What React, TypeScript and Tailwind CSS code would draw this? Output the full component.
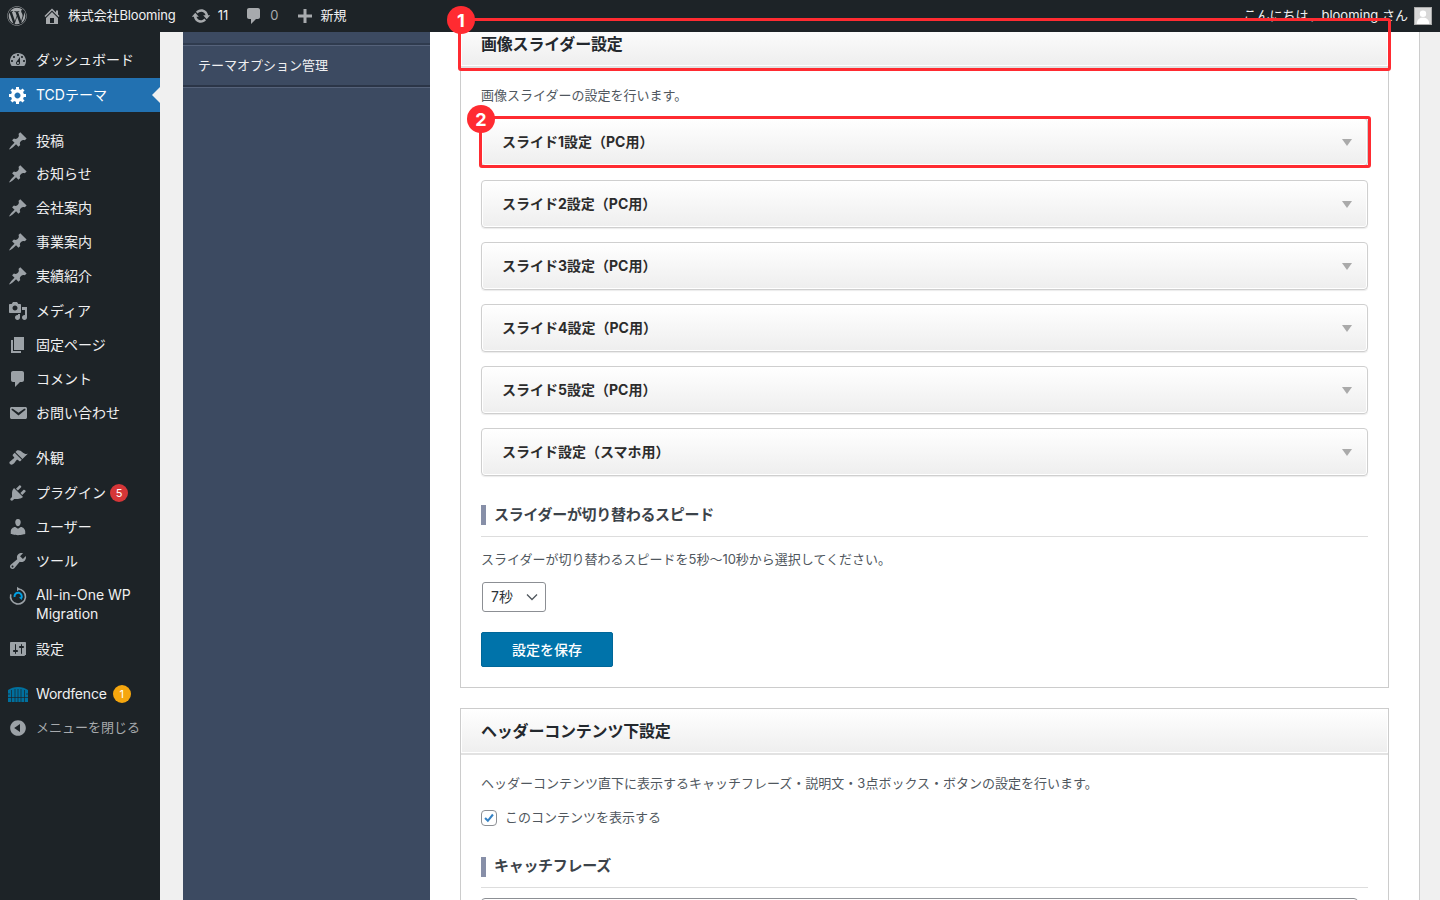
import { FaWordpress } from "react-icons/fa"

const paths = {
  dashboard: "M3.76 16h12.48c1.1-1.37 1.76-3.11 1.76-5 0-4.42-3.58-8-8-8s-8 3.58-8 8c0 1.89.66 3.63 1.76 5zM10 4c.55 0 1 .45 1 1s-.45 1-1 1-1-.45-1-1 .45-1 1-1zM6 6c.55 0 1 .45 1 1s-.45 1-1 1-1-.45-1-1 .45-1 1-1zm8 0c.55 0 1 .45 1 1s-.45 1-1 1-1-.45-1-1 .45-1 1-1zm-5.37 5.55L12 7v6c0 1.1-.9 2-2 2s-2-.9-2-2c0-.57.24-1.08.63-1.45zM4 10c.55 0 1 .45 1 1s-.45 1-1 1-1-.45-1-1 .45-1 1-1zm12 0c.55 0 1 .45 1 1s-.45 1-1 1-1-.45-1-1 .45-1 1-1zm-5 3c0-.55-.45-1-1-1s-1 .45-1 1 .45 1 1 1 1-.45 1-1z",
  pin: "M10.44 3.02l1.82-1.82 6.36 6.35-1.83 1.82c-1.05-.68-2.48-.57-3.41.36l-.75.75c-.92.93-1.04 2.35-.35 3.41l-1.83 1.82-2.41-2.41-2.8 2.79c-.42.42-3.38 2.71-3.8 2.29s1.86-3.39 2.28-3.81l2.79-2.79L4.1 9.36l1.83-1.82c1.05.69 2.48.57 3.4-.36l.75-.75c.93-.92 1.05-2.35.36-3.41z",
  gear: "M18 12h-2.18c-.17.7-.44 1.35-.81 1.93l1.54 1.54-2.1 2.1-1.54-1.54c-.58.36-1.23.63-1.91.79V19H8v-2.18c-.68-.16-1.33-.43-1.91-.79l-1.54 1.54-2.12-2.12 1.54-1.54c-.36-.58-.63-1.23-.79-1.91H1V9.03h2.17c.16-.7.44-1.35.8-1.94L2.43 5.55l2.1-2.1 1.54 1.54c.58-.37 1.24-.64 1.93-.81V2h3v2.18c.68.16 1.33.43 1.91.79l1.54-1.54 2.12 2.12-1.54 1.54c.36.59.64 1.24.8 1.94H18V12zm-8.5 1.5c1.66 0 3-1.34 3-3s-1.34-3-3-3-3 1.34-3 3 1.34 3 3 3z",
  media: "M13 11V4c0-.55-.45-1-1-1h-1.67L9 1H5L3.67 3H2c-.55 0-1 .45-1 1v7c0 .55.45 1 1 1h10c.55 0 1-.45 1-1zM7 4.5c1.38 0 2.5 1.12 2.5 2.5S8.38 9.5 7 9.5 4.5 8.38 4.5 7 5.62 4.5 7 4.5zM14 6h5v10.5c0 1.38-1.12 2.5-2.5 2.5S14 17.88 14 16.5s1.12-2.5 2.5-2.5c.17 0 .34.02.5.05V9h-3V6zm-4 8.05V13h2v3.5c0 1.38-1.12 2.5-2.5 2.5S7 17.88 7 16.5 8.12 14 9.5 14c.17 0 .34.02.5.05z",
  page: "M6 15V2h10v13H6zm-1 1h8v2H3V5h2v11z",
  comment: "M5 2h9c1.1 0 2 .9 2 2v7c0 1.1-.9 2-2 2h-2l-5 5v-5H5c-1.1 0-2-.9-2-2V4c0-1.1.9-2 2-2z",
  mail: "M3.87 4h13.25C18.37 4 19 4.59 19 5.79v8.42c0 1.19-.63 1.79-1.88 1.79H3.87c-1.25 0-1.88-.6-1.88-1.79V5.79c0-1.2.63-1.79 1.88-1.79zm6.62 8.6l6.74-5.53c.24-.2.43-.66.13-1.07-.29-.41-.82-.42-1.17-.17l-5.7 3.86L4.8 5.83c-.35-.25-.88-.24-1.17.17-.3.41-.11.87.13 1.07z",
  appearance: "M14.48 11.06L7.41 3.99l1.5-1.5c.5-.56 2.3-.47 3.51.32 1.21.8 1.43 1.28 2.91 2.1 1.18.64 2.45 1.26 4.45.85zm-.71.71L6.7 4.7 4.93 6.47c-.39.39-.39 1.02 0 1.41l1.06 1.06c.39.39.39 1.03 0 1.42-.6.6-1.43 1.11-2.21 1.69-.35.26-.7.53-1.01.84C1.43 13.23.79 14.75 2.02 15.98c1.24 1.24 2.76.59 4.09-.74.31-.31.58-.66.85-1.01.57-.78 1.08-1.61 1.69-2.21.39-.39 1.02-.39 1.41 0l1.06 1.06c.39.39 1.02.39 1.41 0z",
  plugin: "M13.11 4.36L9.87 7.6 8 5.73l3.24-3.24c.35-.34 1.05-.2 1.56.32.52.51.66 1.21.31 1.55zm-8 1.77l.91-1.12 9.01 9.01-1.19.84c-.71.71-2.63 1.16-3.82 1.16H6.14L4.9 17.26c-.59.59-1.54.59-2.12 0-.59-.58-.59-1.53 0-2.12l1.24-1.24v-3.88c0-1.13.4-3.19 1.09-3.89zm7.26 3.97l3.24-3.24c.34-.35 1.04-.21 1.55.31.52.51.66 1.21.31 1.55l-3.24 3.25z",
  users: "M10 9.25c-2.27 0-2.73-3.44-2.73-3.44C7 4.02 7.82 2 9.97 2c2.16 0 2.98 2.02 2.71 3.81 0 0-.41 3.44-2.68 3.44zm0 2.57L12.72 10c2.39 0 4.52 2.33 4.52 4.53v2.49s-3.65 1.13-7.24 1.13c-3.65 0-7.24-1.13-7.24-1.13v-2.49c0-2.25 1.94-4.48 4.47-4.48z",
  tools: "M16.68 9.77c-1.34 1.34-3.3 1.67-4.95.99l-5.41 6.52c-.99.99-2.59.99-3.58 0s-.99-2.59 0-3.57l6.52-5.42c-.68-1.65-.35-3.61.99-4.95 1.28-1.28 3.12-1.62 4.72-1.06l-2.89 2.89 2.82 2.82 2.86-2.87c.53 1.58.18 3.39-1.08 4.65zM3.81 16.21c.4.39 1.04.39 1.43 0 .4-.4.4-1.04 0-1.43-.39-.4-1.03-.4-1.43 0-.39.39-.39 1.03 0 1.43z",
  settings: "M18 16V4c0-.55-.45-1-1-1H3c-.55 0-1 .45-1 1v12c0 .55.45 1 1 1h13c.55 0 1-.45 1-1zM8 11h1c.55 0 1 .45 1 1s-.45 1-1 1H8v1.5c0 .28-.22.5-.5.5s-.5-.22-.5-.5V13H6c-.55 0-1-.45-1-1s.45-1 1-1h1V5.5c0-.28.22-.5.5-.5s.5.22.5.5V11zm5-2h-1c-.55 0-1-.45-1-1s.45-1 1-1h1V5.5c0-.28.22-.5.5-.5s.5.22.5.5V7h1c.55 0 1 .45 1 1s-.45 1-1 1h-1v5.5c0 .28-.22.5-.5.5s-.5-.22-.5-.5V9z",
  collapse: "M10 2.16c4.33 0 7.84 3.51 7.84 7.84s-3.51 7.84-7.84 7.84S2.16 14.33 2.16 10 5.71 2.16 10 2.16zm2 11.72V6.12L6.18 9.97z",
  home: "M16 8.5l1.53 1.53-1.06 1.06L10 4.62l-6.47 6.47-1.06-1.06L10 2.5l4 4v-2h2v4zm-6-2.46l6 5.99V18H4v-5.97zM12 17v-5H8v5h4z",
  update: "M10.2 3.28c3.53 0 6.43 2.61 6.92 6h2.08l-3.5 4-3.5-4h2.32c-.45-1.97-2.21-3.45-4.32-3.45-1.45 0-2.73.71-3.54 1.78L4.95 5.66C6.23 4.2 8.11 3.28 10.2 3.28zm-.4 13.44c-3.52 0-6.43-2.61-6.92-6H.8l3.5-4c1.17 1.33 2.33 2.67 3.5 4H5.48c.45 1.97 2.21 3.45 4.32 3.45 1.45 0 2.73-.71 3.54-1.78l1.71 1.95c-1.28 1.46-3.15 2.38-5.25 2.38z",
  plus: "M17 8.5v3h-5.5V17h-3v-5.5H3v-3h5.5V3h3v5.5z",
}

function Dash({ d, className }: { d: string; className?: string }) {
  return (
    <svg viewBox="0 0 20 20" className={className} fill="currentColor" fillRule="evenodd">
      <path d={d} />
    </svg>
  )
}

function MigrationIcon() {
  return (
    <svg viewBox="0 0 20 20" className="w-5 h-5" fill="none">
      <path d="M10 3a7.5 7.5 0 1 1-7.2 5.4" stroke="#9ca2a7" strokeWidth="1.6" />
      <path d="M9 0.8 12 3 9 5.2z" fill="#9ca2a7" />
      <path d="M6.6 11a3.6 3.6 0 1 1 6.6 1.2" stroke="#00a0e4" strokeWidth="2" />
      <path d="M10.8 11.6 13.8 11l.2 3z" fill="#00a0e4" />
    </svg>
  )
}

function FenceIcon() {
  return (
    <svg viewBox="0 0 20 15" className="w-5 h-[15px]" fill="#00709e">
      <path d="M0 3c3-2 6-3 10-3s7 1 10 3v12H0z" />
      <g stroke="#1d2327" strokeWidth="0.7" fill="none">
        <path d="M3.5 3v12M7 2v13M10 2v13M13 2v13M16.5 3v12M0 10.5h20M0 7h2M18 7h2" />
      </g>
    </svg>
  )
}

type Item = { label: string; d?: string; custom?: "migration" | "fence"; gap?: string; h?: string; badge?: string; badgeClass?: string }

const menu: Item[] = [
  { label: "投稿", d: paths.pin, gap: "mt-[12px]" },
  { label: "お知らせ", d: paths.pin, gap: "-mt-px" },
  { label: "会社案内", d: paths.pin },
  { label: "事業案内", d: paths.pin },
  { label: "実績紹介", d: paths.pin },
  { label: "メディア", d: paths.media, gap: "mt-px" },
  { label: "固定ページ", d: paths.page },
  { label: "コメント", d: paths.comment },
  { label: "お問い合わせ", d: paths.mail },
  { label: "外観", d: paths.appearance, gap: "mt-[11px]" },
  { label: "プラグイン", d: paths.plugin, gap: "mt-px", badge: "5", badgeClass: "bg-[#d63638] ml-[4px]" },
  { label: "ユーザー", d: paths.users },
  { label: "ツール", d: paths.tools },
  { label: "All-in-One WP Migration", custom: "migration", h: "h-[54px]" },
  { label: "設定", d: paths.settings },
  { label: "Wordfence", custom: "fence", gap: "mt-[11px]", badge: "1", badgeClass: "bg-[#f5a60e] ml-[6px]" },
]

function MenuRow({ item }: { item: Item }) {
  return (
    <div className={`flex items-center ${item.h ?? "h-[34px]"} ${item.gap ?? ""} text-[14px] text-[#f0f0f1]`}>
      <div className={`w-[36px] flex justify-center text-[#9ca2a7] shrink-0 ${item.custom === "migration" ? "self-start mt-[8px]" : ""}`}>
        {item.d && <Dash d={item.d} className="w-5 h-5" />}
        {item.custom === "migration" && <MigrationIcon />}
        {item.custom === "fence" && <FenceIcon />}
      </div>
      <span className={item.custom === "migration" ? "leading-[19px] w-[110px] pb-[2px]" : item.custom === "fence" ? "leading-[19px] pb-[2px] tracking-[-0.2px]" : "leading-[19px] pb-[2px]"}>{item.label}</span>
      {item.badge && (
        <span className={`w-[18px] h-[18px] rounded-full text-white text-[11px] flex items-center justify-center ${item.badgeClass}`}>
          {item.badge}
        </span>
      )}
    </div>
  )
}

function Sidebar() {
  return (
    <aside className="w-[160px] shrink-0 bg-[#1d2327] pt-[11px]">
      <div className="flex items-center h-[34px] text-[14px] text-[#f0f0f1]">
        <div className="w-[36px] flex justify-center text-[#9ca2a7]">
          <Dash d={paths.dashboard} className="w-5 h-5" />
        </div>
        <span className="pb-[2px]">ダッシュボード</span>
      </div>
      <div className="relative flex items-center h-[34px] mt-px bg-[#2271b1] text-[14px] text-white">
        <div className="w-[36px] flex justify-center">
          <Dash d={paths.gear} className="w-5 h-5" />
        </div>
        <span className="pb-[2px]">TCDテーマ</span>
        <span className="absolute right-0 top-[9px] border-y-[8px] border-y-transparent border-r-[8px] border-r-[#f0f0f0]" />
      </div>
      {menu.map((item) => (
        <MenuRow key={item.label} item={item} />
      ))}
      <div className="flex items-center h-[34px] text-[14px] text-[#a7aaad]">
        <div className="w-[36px] flex justify-center text-[#9ca2a7]">
          <Dash d={paths.collapse} className="w-5 h-5" />
        </div>
        <span className="text-[13px]">メニューを閉じる</span>
      </div>
    </aside>
  )
}

function AdminBar() {
  return (
    <header className="h-[32px] bg-[#1d2327] flex items-center text-[13px] text-[#f0f0f1] shrink-0 relative z-10">
      <FaWordpress className="w-5 h-5 ml-[7px] text-[#a7aaad]" />
      <Dash d={paths.home} className="w-5 h-5 ml-[15px] text-[#a7aaad]" />
      <span className="ml-[6px] tracking-[-0.15px]">株式会社Blooming</span>
      <Dash d={paths.update} className="w-5 h-5 ml-[15px] text-[#a7aaad]" />
      <span className="ml-[7px]">11</span>
      <Dash d={paths.comment} className="w-5 h-5 ml-[16px] text-[#a7aaad]" />
      <span className="ml-[6px] text-[#a7aaad]">0</span>
      <Dash d={paths.plus} className="w-5 h-5 ml-[17px] text-[#a7aaad]" />
      <span className="ml-[5px]">新規</span>
      <span className="ml-auto">こんにちは、blooming さん</span>
      <div className="w-[18px] h-[18px] ml-[6px] mr-[8px] bg-[#d8d8d8] border border-[#aaa] overflow-hidden">
        <svg viewBox="0 0 18 18" className="w-full h-full" fill="#fff">
          <circle cx="9" cy="6.5" r="3.6" />
          <path d="M2 18c0-5 3-7 7-7s7 2 7 7z" />
        </svg>
      </div>
    </header>
  )
}

function ThemeNav() {
  return (
    <nav className="w-[247px] shrink-0 ml-[23px] bg-[#3c4a61]">
      <div className="h-[11px]" />
      <div className="h-[42px] border-t-2 border-t-[#2f3b4e] flex items-center pl-[15px] pt-[2px] text-[13px] text-[#f0f0f1] [box-shadow:inset_0_3px_0_-2px_#55627a]">
        テーマオプション管理
      </div>
      <div className="h-[2px] bg-[#2b3547]" />
      <div className="h-px bg-[#55627a]" />
    </nav>
  )
}

function SlideRow({ label }: { label: string }) {
  return (
    <div className="h-[48px] flex items-center justify-between pl-[20px] pr-[15px] border border-[#cfcfcf] rounded-[4px] bg-gradient-to-b from-white to-[#eeeeee] [box-shadow:inset_0_0_0_1px_#fff,0_1px_1px_rgba(0,0,0,0.08)] text-[14px] font-bold text-[#2c2c2c]">
      <span className="pb-[2px]">{label}</span>
      <span className="border-x-[5.5px] border-x-transparent border-t-[7px] border-t-[#aaaaaa]" />
    </div>
  )
}

function CardHeader({ title }: { title: string }) {
  return (
    <div className="h-[46px] flex items-center px-5 border-b-2 border-b-[#e2e2e2] bg-gradient-to-b from-white to-[#eeeeee] [box-shadow:inset_0_0_0_1px_#fff] text-[16px] font-bold tracking-[-0.2px] text-[#23282d]">
      {title}
    </div>
  )
}

function SubHeading({ title, pb }: { title: string; pb: string }) {
  return (
    <div className={`${pb} border-b border-b-[#dddddd]`}>
      <div className="flex items-center h-[20px]">
        <span className="w-[5px] h-[20px] bg-[#878fa8] mr-[8px]" />
        <span className="text-[15px] font-bold tracking-[-0.3px] text-[#3c434a]">{title}</span>
      </div>
    </div>
  )
}

function Main() {
  const slides = ["スライド1設定（PC用）", "スライド2設定（PC用）", "スライド3設定（PC用）", "スライド4設定（PC用）", "スライド5設定（PC用）", "スライド設定（スマホ用）"]
  return (
    <main className="w-[990px] shrink-0 bg-white border-r border-r-[#cccccc] px-[30px] overflow-hidden">
      <section className="-mt-[11px] border border-[#cccccc] w-[929px] pb-[20px]">
        <CardHeader title="画像スライダー設定" />
        <div className="px-5 pt-[17px]">
          <p className="text-[13px] leading-[20px] text-[#50575e]">画像スライダーの設定を行います。</p>
          <div className="mt-[13px] flex flex-col gap-[14px]">
            {slides.map((s) => (
              <SlideRow key={s} label={s} />
            ))}
          </div>
          <div className="mt-[29px]">
            <SubHeading title="スライダーが切り替わるスピード" pb="pb-[11px]" />
          </div>
          <p className="mt-[12px] text-[13px] leading-[20px] text-[#50575e]">
            スライダーが切り替わるスピードを5秒〜10秒から選択してください。
          </p>
          <div className="mt-[13px] ml-px w-[64px] h-[30px] flex items-center justify-between pl-[8px] pr-[7px] pb-px border border-[#8c8f94] rounded-[3px] text-[14px] text-[#2c3338]">
            7秒
            <svg viewBox="0 0 12 8" className="w-[12px] h-[8px]" fill="none" stroke="#50575e" strokeWidth="1.3">
              <path d="M1 1.5l5 5 5-5" />
            </svg>
          </div>
          <button className="mt-[20px] w-[132px] h-[35px] flex items-center justify-center bg-[#0073aa] border border-[#006799] rounded-[2px] text-[14px] font-medium text-white">
            設定を保存
          </button>
        </div>
      </section>

      <section className="mt-[20px] border border-[#cccccc] w-[929px]">
        <CardHeader title="ヘッダーコンテンツ下設定" />
        <div className="px-5 pt-[18px]">
          <p className="text-[13px] leading-[20px] text-[#50575e]">
            ヘッダーコンテンツ直下に表示するキャッチフレーズ・説明文・3点ボックス・ボタンの設定を行います。
          </p>
          <div className="mt-[15px] flex items-center text-[13px] text-[#50575e]">
            <span className="w-4 h-4 border border-[#8c8f94] rounded-[4px] flex items-center justify-center mr-2">
              <svg viewBox="0 0 16 16" className="w-[14px] h-[14px]" fill="none" stroke="#3582c4" strokeWidth="2.4">
                <path d="M3.5 8l3.2 3.2L12.5 4" />
              </svg>
            </span>
            このコンテンツを表示する
          </div>
          <div className="mt-[29px]">
            <SubHeading title="キャッチフレーズ" pb="pb-[10px]" />
          </div>
          <div className="mt-[10px] w-[877px] h-[40px] border border-[#8c8f94] rounded-[4px]" />
        </div>
      </section>
    </main>
  )
}

function Annotation({ n, className, badgeClass }: { n: string; className: string; badgeClass: string }) {
  return (
    <div className={`absolute border-[3px] border-[#ff2b31] rounded-[3px] z-20 ${className}`}>
      <span className={`absolute w-[28px] h-[28px] rounded-full bg-[#ff2b31] text-white text-[18px] font-bold flex items-center justify-center ${badgeClass}`}>
        {n}
      </span>
    </div>
  )
}

export default function App() {
  return (
    <div className="relative w-full h-[900px] overflow-hidden flex flex-col bg-[#f0f0f0] [font-family:Inter,'Noto_Sans_CJK_JP',sans-serif]">
      <AdminBar />
      <div className="flex flex-1 min-h-0">
        <Sidebar />
        <ThemeNav />
        <Main />
      </div>
      <Annotation n="1" className="left-[458px] top-[18px] w-[933px] h-[53px]" badgeClass="-left-[14px] -top-[15px]" />
      <Annotation n="2" className="left-[479px] top-[116px] w-[892px] h-[52px]" badgeClass="-left-[15px] -top-[14px]" />
    </div>
  )
}
